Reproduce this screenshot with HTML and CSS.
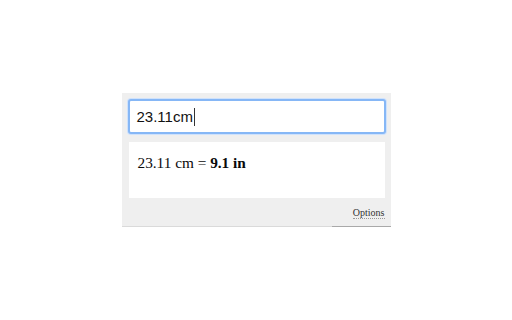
FILE: index.html
```html
<!DOCTYPE html>
<html>
<head>
<meta charset="utf-8">
<link rel="stylesheet" href="styles.css">
</head>
<body>
<div class="stage">
  <div class="panel">
    <div class="field"><span class="value">23.11cm</span><span class="caret"></span></div>
    <div class="result">23.11 cm = <b>9.1 in</b></div>
    <div class="footer"><span class="options">Options</span></div>
  </div>
</div>
</body>
</html>
```
FILE: styles.css
```css
html, body {
  margin: 0;
  padding: 0;
  background: #ffffff;
}
.stage {
  width: 512px;
  height: 320px;
  display: flex;
  justify-content: center;
  align-items: center;
}
.panel {
  width: 269px;
  box-sizing: border-box;
  padding: 6px 5px 0 6px;
  background: #efefef;
  border-bottom: 1px solid #d6d6d6;
  border-image: linear-gradient(to right, #dadada 78%, #a9a9a9 78%) 1;
  display: flex;
  flex-direction: column;
}
.field {
  height: 35px;
  box-sizing: border-box;
  border: 2px solid #86b7f6;
  border-radius: 3px;
  background: #ffffff;
  box-shadow: 0 0 0 1px #cfe2fc;
  padding-left: 7px;
  display: flex;
  align-items: center;
  font-family: "Liberation Sans", Arial, sans-serif;
  font-size: 15px;
  color: #111;
}
.caret {
  width: 1px;
  height: 18px;
  background: #333;
  margin-left: 1px;
}
.result {
  margin: 8px 1px 0 1px;
  height: 56px;
  box-sizing: border-box;
  background: #ffffff;
  padding: 12px 0 0 9px;
  font-family: "Liberation Serif", "Times New Roman", serif;
  font-size: 15.3px;
  line-height: 18px;
  color: #0a0a0a;
}
.footer {
  height: 28px;
  display: flex;
  justify-content: flex-end;
  align-items: flex-start;
  padding: 9px 1px 0 0;
  box-sizing: border-box;
}
.options {
  font-family: "Liberation Serif", "Times New Roman", serif;
  font-size: 10px;
  line-height: 11px;
  color: #333;
  border-bottom: 1px dotted #999;
}
```
